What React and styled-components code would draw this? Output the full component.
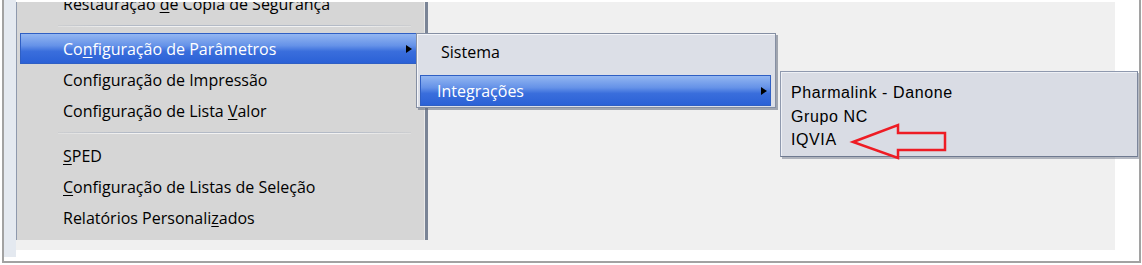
import React from "react";
import styled, { createGlobalStyle, css } from "styled-components";

const Global = createGlobalStyle`
  html, body { margin: 0; padding: 0; background: #ffffff; }
  * { box-sizing: border-box; }
`;

const Frame = styled.div`
  margin-left: 2px;
  width: 1139px;
  height: 263px;
  border: 2px solid #a2a2a2;
  border-top: none;
  background: #ffffff;
  display: flex;
  align-items: flex-start;
  overflow: hidden;
`;

const Strip = styled.div`
  width: 12px;
  height: 257px;
  background: #e4e9f0;
  flex: none;
`;

const Desktop = styled.div`
  position: relative;
  margin-top: 2px;
  width: 1099px;
  height: 248px;
  background: #f0f0f0;
  display: flex;
  align-items: flex-start;
  flex: none;
`;

const MainMenu = styled.div`
  width: 412px;
  height: 238px;
  background: #d6d6d6;
  border-left: 1px solid #8e99ad;
  border-right: 3px solid #7a8496;
  box-shadow: inset -1px 0 0 #e9e9e9;
  padding: 0 4px 0 3px;
  overflow: hidden;
  font-family: "Open Sans", "Noto Sans", sans-serif;
  font-size: 16px;
  color: #000;
`;

const List = styled.div`
  margin-top: -14px;
  display: flex;
  flex-direction: column;
`;

const highlight = css`
  background: linear-gradient(to bottom, #93b6f1 0%, #6592e8 40%, #3a6edc 60%, #2b61d6 100%);
  border: 1px solid #2f5fc4;
  color: #ffffff;
`;

const Item = styled.div`
  height: ${(p) => p.$h || 31}px;
  display: flex;
  align-items: center;
  padding-left: ${(p) => p.$indent}px;
  padding-right: ${(p) => p.$right || 8}px;
  border: 1px solid transparent;
  white-space: nowrap;
  ${(p) => p.$active && highlight}
`;

const Label = styled.span`
  line-height: 1;
`;

const Key = styled.u`
  text-decoration-thickness: 1px;
  text-underline-offset: 2px;
`;

const Arrow = styled.span`
  margin-left: auto;
  width: 0;
  height: 0;
  border-top: 4.5px solid transparent;
  border-bottom: 4.5px solid transparent;
  border-left: 6px solid #000;
`;

const Separator = styled.div`
  height: 14px;
  display: flex;
  flex-direction: column;
  justify-content: center;
  padding: 0 10px 0 38px;
  &::before {
    content: "";
    height: 1px;
    background: linear-gradient(to right, rgba(170,178,190,0.2), #b3bac6 20%, #b3bac6 80%, rgba(170,178,190,0.2));
  }
  &::after {
    content: "";
    height: 1px;
    background: linear-gradient(to right, rgba(255,255,255,0.2), #f2f2f2 20%, #f2f2f2 80%, rgba(255,255,255,0.2));
  }
`;

const SubMenu = styled.div`
  position: absolute;
  left: 400px;
  top: 31px;
  width: 360px;
  height: 75px;
  background: #dcdfe7;
  border: 1px solid #858fa3;
  box-shadow: inset 1px 1px 0 #f4f5f9, 2px 2px 0 rgba(95, 104, 122, 0.55);
  padding: 2px 4px 1px 3px;
  display: flex;
  flex-direction: column;
  gap: 7px;
  font-family: "Open Sans", "Noto Sans", sans-serif;
  font-size: 16px;
  color: #000;
`;

const SubMenu3 = styled.div`
  position: absolute;
  left: 764px;
  top: 69px;
  width: 358px;
  height: 86px;
  background: #d9dce4;
  border: 1px solid #8f99ae;
  border-bottom-color: #6f7a90;
  border-right-color: #7c869b;
  box-shadow: inset 1px 1px 0 #eef0f5, 2px 2px 0 rgba(110, 118, 135, 0.5);
  padding: 9px 10px 0 10px;
  font-family: "Liberation Sans", Arial, sans-serif;
  font-size: 16px;
  letter-spacing: 0.6px;
  color: #000;
`;

const Plain = styled.div`
  height: 23.5px;
  line-height: 23.5px;
  white-space: nowrap;
`;

const Callout = styled.svg`
  position: absolute;
  left: 70px;
  top: 50px;
  overflow: visible;
`;

export default function App() {
  return (
    <>
      <Global />
      <Frame>
        <Strip />
        <Desktop>
          <MainMenu>
            <List>
              <Item $indent={42}>
                <Label>Restauração <Key>d</Key>e Cópia de Segurança</Label>
              </Item>
              <Separator />
              <Item $indent={42} $active>
                <Label>Co<Key>n</Key>figuração de Parâmetros</Label>
                <Arrow />
              </Item>
              <Item $indent={42}>
                <Label>Confi<Key>g</Key>uração de Impressão</Label>
              </Item>
              <Item $indent={42}>
                <Label>Configuração de Lista <Key>V</Key>alor</Label>
              </Item>
              <Separator />
              <Item $indent={42}>
                <Label><Key>S</Key>PED</Label>
              </Item>
              <Item $indent={42}>
                <Label><Key>C</Key>onfiguração de Listas de Seleção</Label>
              </Item>
              <Item $indent={42}>
                <Label>Relatórios Personali<Key>z</Key>ados</Label>
              </Item>
            </List>
          </MainMenu>

          <SubMenu>
            <Item $indent={20} $h={33}>
              <Label>Sistema</Label>
            </Item>
            <Item $indent={16} $h={31} $right={3} $active>
              <Label>Integrações</Label>
              <Arrow />
            </Item>
          </SubMenu>

          <SubMenu3>
            <Plain>Pharmalink - Danone</Plain>
            <Plain>Grupo NC</Plain>
            <Plain>IQVIA</Plain>
            <Callout width="100" height="40" viewBox="0 0 100 40">
              <polygon
                points="2,20 47,3 47,11 94,11 94,28 47,28 47,36"
                fill="none"
                stroke="#ee1c24"
                strokeWidth="2.5"
                strokeLinejoin="miter"
              />
            </Callout>
          </SubMenu3>
        </Desktop>
      </Frame>
    </>
  );
}
